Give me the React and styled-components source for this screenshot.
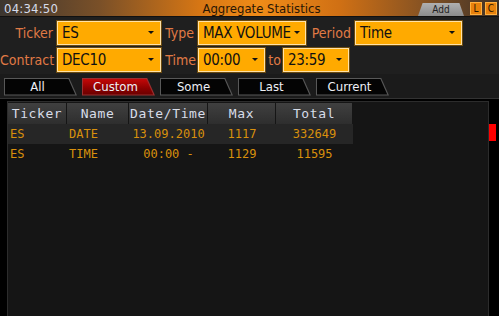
import React from "react";
import styled, { createGlobalStyle } from "styled-components";

const GlobalStyle = createGlobalStyle`
  html, body {
    margin: 0;
    padding: 0;
    background: #000;
  }
  * { box-sizing: border-box; }
`;

const Screen = styled.div`
  width: 499px;
  height: 316px;
  background: #000;
  display: flex;
  flex-direction: column;
  overflow: hidden;
  font-family: "DejaVu Sans Condensed", "DejaVu Sans", sans-serif;
`;

const TitleBar = styled.div`
  height: 17px;
  display: flex;
  align-items: center;
  padding: 0 2px 0 4px;
  border-bottom: 1px solid #111;
  background: linear-gradient(
    90deg,
    #3c3630 0%,
    #7a5028 20%,
    #d67614 40%,
    #f08c18 52%,
    #d07014 68%,
    #8a5422 84%,
    #3e3228 100%
  );
`;

const Clock = styled.span`
  width: 150px;
  font-size: 13px;
  color: #d6dceb;
  letter-spacing: 0.2px;
`;

const Title = styled.span`
  flex: 1;
  text-align: center;
  font-size: 13px;
  color: #2a1604;
  padding-left: 22px;
`;

const TitleRight = styled.div`
  width: 150px;
  display: flex;
  justify-content: flex-end;
  align-items: flex-end;
  align-self: stretch;
  gap: 3px;
  padding-top: 2px;
`;

const AddTab = styled.div`
  width: 46px;
  height: 13px;
  margin-right: 3px;
  background: linear-gradient(#b0b0b0, #8c8c8c);
  clip-path: polygon(10% 0, 90% 0, 100% 100%, 0 100%);
  font-size: 10px;
  color: #222;
  text-align: center;
  line-height: 14px;
`;

const Box = styled.div`
  width: 12px;
  height: 13px;
  margin-bottom: 1px;
  background: #e8820c;
  border: 1px solid #ffb040;
  font-size: 10px;
  line-height: 11px;
  text-align: center;
  color: #2a1400;
`;

const Form = styled.div`
  background: #1f1f1f;
  padding: 3px 0 2px 0;
  display: flex;
  flex-direction: column;
  gap: 2px;
`;

const Row = styled.div`
  display: flex;
  align-items: center;
  height: 25px;
`;

const Label = styled.span`
  width: ${(p) => p.$w}px;
  text-align: right;
  padding-right: ${(p) => p.$pr ?? 4}px;
  font-size: 14px;
  color: #e07a45;
  white-space: nowrap;
`;

const Select = styled.div`
  width: ${(p) => p.$w}px;
  height: 24px;
  background: #ffaa00;
  border: 1px solid #ffe2a8;
  box-shadow: 0 0 0 1px #6a4a10;
  display: flex;
  align-items: center;
  padding: 0 6px 0 4px;
  font-size: 15px;
  color: #111;
`;

const SelectText = styled.span`
  flex: 1;
  white-space: nowrap;
  letter-spacing: -0.3px;
`;

const Arrow = styled.span`
  width: 0;
  height: 0;
  margin-left: 3px;
  border-left: 3px solid transparent;
  border-right: 3px solid transparent;
  border-top: 3px solid #111;
`;

const TabStrip = styled.div`
  height: 25px;
  background: #1b1b1b;
  border-bottom: 1px solid #333;
  display: flex;
  align-items: center;
  gap: 5px;
  padding: 1px 0 0 4px;
`;

const TabShape = styled.div`
  width: 73px;
  height: 18px;
  padding: 1px;
  background: ${(p) => (p.$active ? "#9a3030" : "#585858")};
  clip-path: polygon(0 0, 89% 0, 100% 100%, 0 100%);
`;

const TabInner = styled.div`
  width: 100%;
  height: 100%;
  clip-path: polygon(0 0, 89% 0, 99% 100%, 0 100%);
  background: ${(p) =>
    p.$active ? "linear-gradient(#c40808, #8a0000 60%, #6a0000)" : "#040404"};
  color: #eef0f6;
  font-size: 13px;
  text-align: center;
  padding-right: 6px;
  line-height: 16px;
`;

const Content = styled.div`
  flex: 1;
  padding: 2px 10px 0 7px;
  position: relative;
`;

const Panel = styled.div`
  height: 100%;
  background: #151515;
  border: 1px solid #2c2c2c;
  border-bottom: none;
  padding: 1px 0 0 0;
`;

const Table = styled.div`
  width: 345px;
  display: flex;
  flex-direction: column;
`;

const GridRow = styled.div`
  display: grid;
  grid-template-columns: 59px 62px 79px 68px 77px;
  height: ${(p) => (p.$head ? 21 : 20)}px;
  background: ${(p) => (p.$stripe ? "#262626" : "transparent")};
`;

const HeadCell = styled.div`
  background: linear-gradient(#404040, #2e2e2e);
  border-right: 1px solid #151515;
  color: #d8dde9;
  font-family: "DejaVu Sans Mono", monospace;
  font-size: 13px;
  letter-spacing: 0.6px;
  display: flex;
  align-items: center;
  justify-content: center;
`;

const Cell = styled.div`
  color: #d9900c;
  font-family: "DejaVu Sans Mono", monospace;
  font-size: 12px;
  display: flex;
  align-items: center;
  justify-content: ${(p) => (p.$left ? "flex-start" : "center")};
  padding-left: ${(p) => (p.$left ? 2 : 0)}px;
  white-space: pre;
`;

const ScrollMark = styled.div`
  position: absolute;
  right: 3px;
  top: 25px;
  width: 7px;
  height: 17px;
  background: #ff0000;
`;

const tabs = ["All", "Custom", "Some", "Last", "Current"];
const heads = ["Ticker", "Name", "Date/Time", "Max", "Total"];
const rows = [
  ["ES", "DATE", "13.09.2010", "1117", "332649"],
  ["ES", "TIME", "00:00 -", "1129", "11595"],
];

export default function App() {
  return (
    <>
      <GlobalStyle />
      <Screen>
        <TitleBar>
          <Clock>04:34:50</Clock>
          <Title>Aggregate Statistics</Title>
          <TitleRight>
            <AddTab>Add</AddTab>
            <Box>L</Box>
            <Box>C</Box>
          </TitleRight>
        </TitleBar>

        <Form>
          <Row>
            <Label $w={57}>Ticker</Label>
            <Select $w={104}>
              <SelectText>ES</SelectText>
              <Arrow />
            </Select>
            <Label $w={37}>Type</Label>
            <Select $w={108}>
              <SelectText>MAX VOLUME</SelectText>
              <Arrow />
            </Select>
            <Label $w={49}>Period</Label>
            <Select $w={107}>
              <SelectText>Time</SelectText>
              <Arrow />
            </Select>
          </Row>
          <Row>
            <Label $w={57}>Contract</Label>
            <Select $w={104}>
              <SelectText>DEC10</SelectText>
              <Arrow />
            </Select>
            <Label $w={37} $pr={2}>Time</Label>
            <Select $w={67}>
              <SelectText>00:00</SelectText>
              <Arrow />
            </Select>
            <Label $w={18} $pr={2}>to</Label>
            <Select $w={66}>
              <SelectText>23:59</SelectText>
              <Arrow />
            </Select>
          </Row>
        </Form>

        <TabStrip>
          {tabs.map((t) => (
            <TabShape key={t} $active={t === "Custom"}>
              <TabInner $active={t === "Custom"}>{t}</TabInner>
            </TabShape>
          ))}
        </TabStrip>

        <Content>
          <Panel>
            <Table>
              <GridRow $head>
                {heads.map((h) => (
                  <HeadCell key={h}>{h}</HeadCell>
                ))}
              </GridRow>
              {rows.map((r, i) => (
                <GridRow key={i} $stripe={i === 0}>
                  <Cell $left>{r[0]}</Cell>
                  <Cell $left>{r[1]}</Cell>
                  <Cell>{r[2]}</Cell>
                  <Cell>{r[3]}</Cell>
                  <Cell>{r[4]}</Cell>
                </GridRow>
              ))}
            </Table>
          </Panel>
          <ScrollMark />
        </Content>
      </Screen>
    </>
  );
}
